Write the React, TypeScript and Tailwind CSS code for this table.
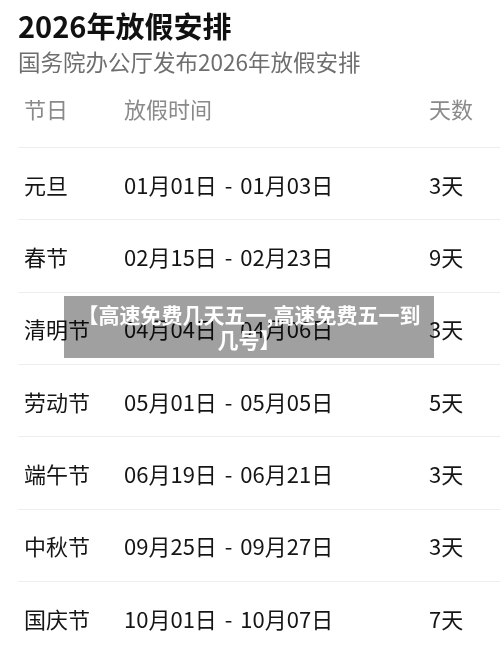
const holidays = [
	{ name: '元旦', from: '01月01日', to: '01月03日', days: '3天' },
	{ name: '春节', from: '02月15日', to: '02月23日', days: '9天' },
	{ name: '清明节', from: '04月04日', to: '04月06日', days: '3天' },
	{ name: '劳动节', from: '05月01日', to: '05月05日', days: '5天' },
	{ name: '端午节', from: '06月19日', to: '06月21日', days: '3天' },
	{ name: '中秋节', from: '09月25日', to: '09月27日', days: '3天' },
	{ name: '国庆节', from: '10月01日', to: '10月07日', days: '7天' },
]

export default function App() {
	return (
		<div
			className="relative w-[500px] h-[654px] overflow-hidden bg-white pl-[18px] pt-[7px]"
			style={{ fontFamily: '"Noto Sans CJK SC", "Noto Sans", sans-serif' }}
		>
			<h1 className="text-[29px] leading-[36px] font-bold text-[#111111]">2026年放假安排</h1>
			<p className="mt-[3px] text-[22.5px] leading-[30px] text-[#6e6e6e]">国务院办公厅发布2026年放假安排</p>

			{/* table */}
			<div className="text-[22px] leading-[30px]">
				<div className="flex h-[71px] pt-[17px] text-[#8a8a8a]">
					<div className="w-[100px] pl-[6px]">节日</div>
					<div className="w-[305px] pl-[6px]">放假时间</div>
					<div className="flex-1 pl-[6px]">天数</div>
				</div>
				{holidays.map( ( h ) => (
					<div key={h.name} className="flex items-center h-[72.33px] border-t border-[#eeeeee] text-[#151515]">
						<div className="w-[100px] pl-[6px]">{h.name}</div>
						<div className="w-[305px] pl-[6px]">
							{h.from}<span className="px-[3px]"> - </span>{h.to}
						</div>
						<div className="flex-1 pl-[6px]">{h.days}</div>
					</div>
				) )}
			</div>

			{/* caption over the picture */}
			<div className="absolute left-[64px] top-[296px] w-[370px] h-[62px] bg-[#a0a0a0] mix-blend-multiply" />
			<div className="absolute left-[64px] top-[296px] w-[370px] h-[62px] px-[8px] flex items-center justify-center">
				<p className="text-center text-white font-bold text-[21px] leading-[25px]">【高速免费几天五一,高速免费五一到几号】</p>
			</div>
		</div>
	)
}
